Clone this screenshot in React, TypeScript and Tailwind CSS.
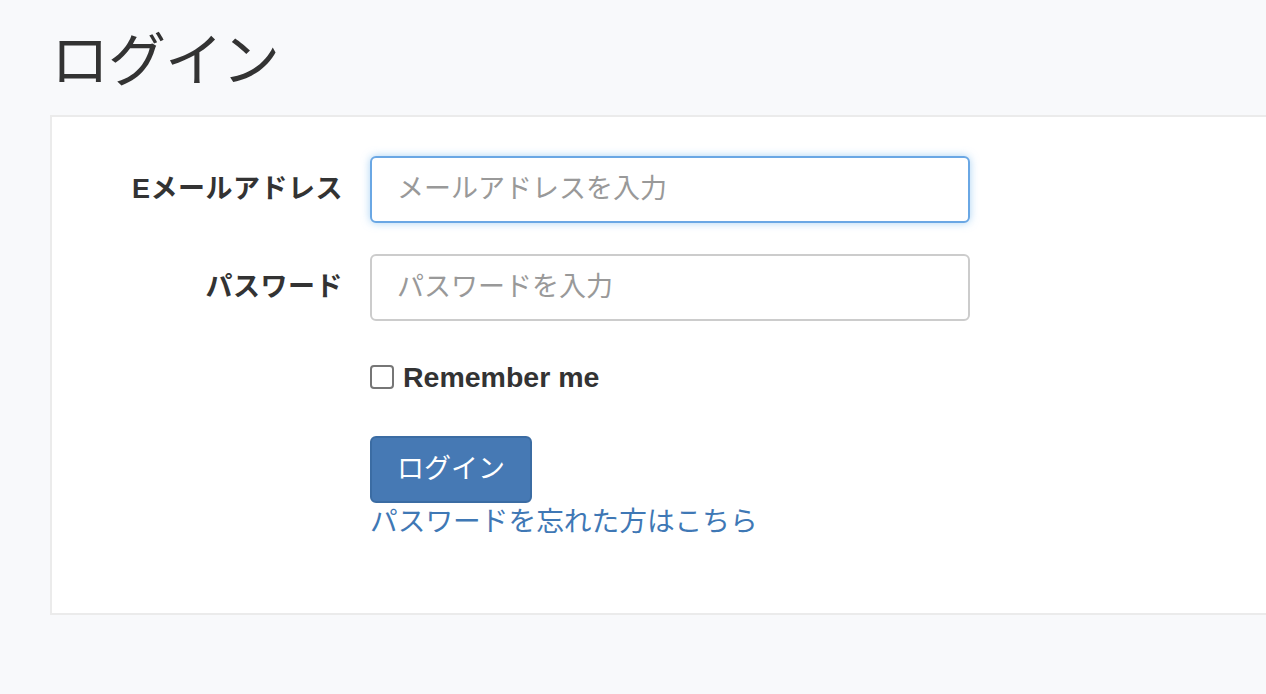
import React from 'react'

const font = { fontFamily: '"Liberation Sans", "Noto Sans CJK JP", sans-serif' }

export default function App() {
  return (
    <div className="min-h-[694px] w-[1266px] overflow-hidden bg-[#f8f9fb] text-[#333]" style={font}>
      <div className="pl-[50px] pt-[22px]">
        <h1 className="mb-[21px] h-[72px] pl-[1px] pt-[5px] text-[58px] font-normal leading-[67px] tracking-[-1px]">ログイン</h1>
        <div className="h-[500px] border-2 border-r-0 border-[#ebebeb] bg-white pt-[39px]">
          <div className="flex items-center">
            <label className="w-[291px] text-right text-[27px] font-bold tracking-[0.5px]">Eメールアドレス</label>
            <input
              type="email"
              placeholder="メールアドレスを入力"
              className="ml-[27px] h-[67px] w-[600px] rounded-[6px] border-2 border-[#6aa7e4] bg-white px-[25px] text-[27px] text-[#555] placeholder-[#999] shadow-[0_0_8px_rgba(102,175,233,0.55)] outline-none"
            />
          </div>
          <div className="mt-[31px] flex items-center">
            <label className="w-[291px] text-right text-[27px] font-bold tracking-[0.5px]">パスワード</label>
            <input
              type="password"
              placeholder="パスワードを入力"
              className="ml-[27px] h-[67px] w-[600px] rounded-[6px] border-2 border-[#cccccc] bg-white px-[25px] text-[27px] text-[#555] placeholder-[#999] outline-none"
            />
          </div>
          <div className="ml-[318px] mt-[40px] flex items-center">
            <span className="box-border h-[24px] w-[24px] rounded-[4px] border-2 border-[#767676] bg-white" />
            <span className="ml-[9px] text-[28.5px] font-bold leading-[32px]">Remember me</span>
          </div>
          <div className="ml-[318px] mt-[43px]">
            <button className="h-[67px] rounded-[6px] border-2 border-[#3b6ca3] bg-[#4679b4] px-[25px] text-[27px] text-white">
              ログイン
            </button>
            <div className="mt-[1px] text-[27.7px] leading-[36px] text-[#3f78b5]">パスワードを忘れた方はこちら</div>
          </div>
        </div>
      </div>
    </div>
  )
}
